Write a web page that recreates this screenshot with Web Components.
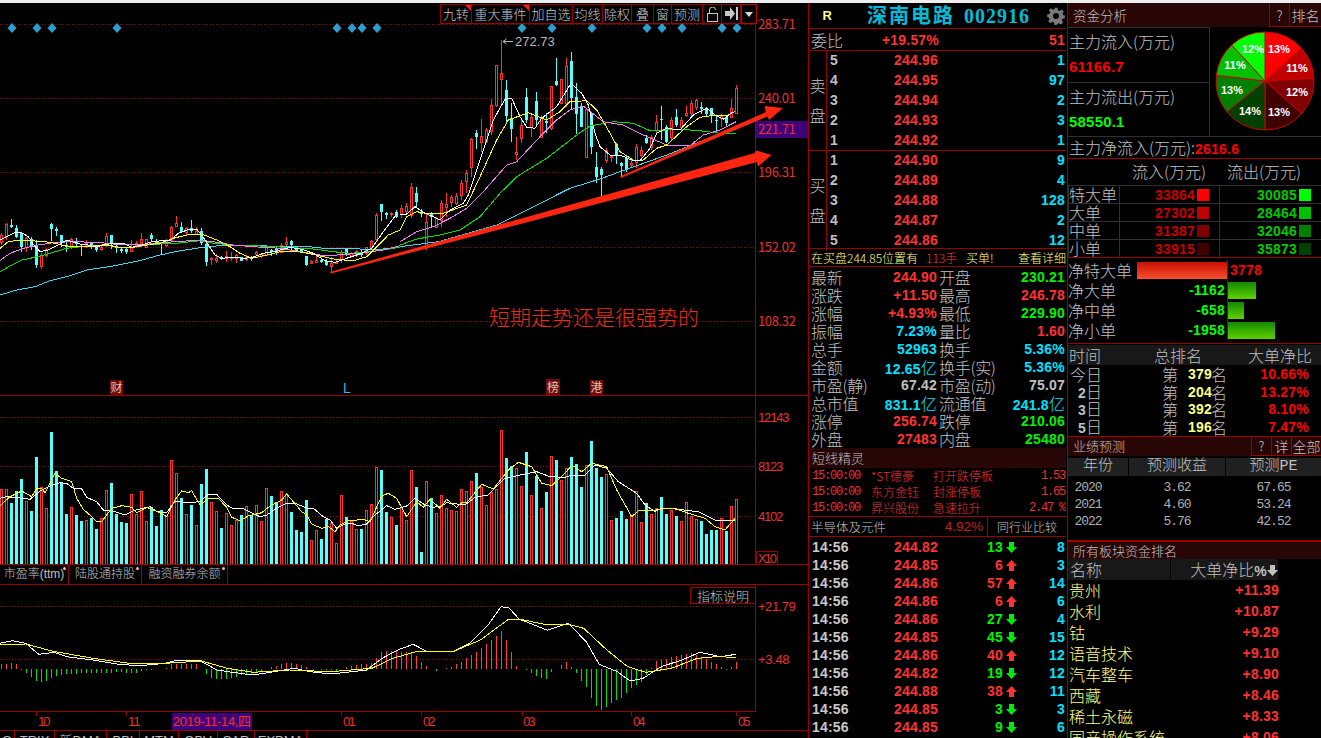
<!DOCTYPE html>
<html lang="zh">
<head>
<meta charset="utf-8">
<title>深南电路 002916</title>
<style>
  html, body { margin: 0; height: 738px; overflow: hidden; background: #000; }
</style>
</head>
<body>
<stock-app>
  <chart-column slot="chart"></chart-column>
  <quote-column slot="quote"></quote-column>
  <fund-column slot="fund"></fund-column>
</stock-app>

<script>
const CJK = '"Noto Sans CJK SC", sans-serif'
const NUM = '"Liberation Sans", "Noto Sans CJK SC", sans-serif'
const LINE = '#990000'
const RED = '#ff3232'
const CYAN = '#54ffff'

// 用量柱顶部 y（放大图坐标），正数红 负数青
const VOL = [
  208,208,-249,-213,-177,243,-273,-111,202,264,
  -36,-153,-186,-282,261,-285,-303,300,-294,-327,
  294,210,-189,-282,-306,-309,222,282,213,303,
  -261,-318,-270,288,120,159,-234,282,-255,315,
  -192,-147,246,273,-324,279,315,300,-285,258,
  -285,255,303,204,-228,-246,213,222,-276,-330,
  -336,-240,360,330,-357,-297,309,369,225,-291,
  303,327,-327,270,252,
  141,-150,-276,291,-315,261,300,150,-201,-396,
  183,-234,279,225,264,270,273,207,213,183,
  -159,201,255,216,207,30,-114,-138,144,198,
  -96,225,-168,264,-216,108,-120,180,144,-111,
  -132,-201,135,-63,-144,-171,162,300,-294,-273,
  -297,285,213,306,-249,282,264,-231,-282,270,
  -288,303,246,288,297,-303,-342,-330,-330,294,
  -333,258,237
]

// [高, 实体上, 实体下, 低]
const CANDLE_A = [
  [130,135,155,165],[100,103,138,150],[87,105,112,115],[105,115,140,145],[125,130,172,185],
  [140,145,172,185],[140,148,172,180],[150,165,225,235],[190,195,228,237],[175,178,195,200],
  [100,102,118,152],[112,118,122,138],[135,135,158,170],[155,165,170,185],[143,146,172,178],
  [145,152,162,170],[165,168,172,198],[150,158,165,175],[155,160,165,177],[168,172,180,185],
  [162,170,176,182],[130,138,160,172],[135,135,160,178],[165,168,175,188],[170,176,182,188],
  [170,178,185,192],[150,170,182,184],[152,158,165,175],[128,148,158,172],[148,148,172,175],
  [128,135,148,155],[148,155,158,165],[155,160,162,192],[148,152,165,170],[108,110,150,155],
  [78,100,108,112],[97,110,125,130],[112,115,125,135],[90,115,122,128],[112,122,132,136],
  [114,122,160,165],[160,162,216,228],[200,203,207,224],[192,205,210,218],[198,202,208,210],
  [182,198,204,215],[185,200,204,212],[192,196,204,218],[202,202,212,213],[195,202,208,213],
  [198,202,208,212],[182,185,193,197],[190,192,197,205],[170,172,194,195],[176,180,186,198],
  [172,178,188,195],[160,165,185,190],[142,155,163,178],[150,152,165,180],[168,170,183,185],
  [175,180,185,190],[198,198,225,228],[210,214,220,222],[195,211,215,220],[205,210,215,218],
  [208,212,226,228],[200,220,228,247],[210,215,218,220],[180,185,208,218],[175,177,195,197],
  [185,190,198,202],[180,183,195,200],[180,187,195,200],[170,172,190,195],[150,153,172,178],
  [70,75,148,155],[42,42,65,92],[65,70,75,88],[65,68,72,80],[60,66,80,85]
]
const CANDLE_B = [
  [495,505,522,535],[490,497,512,525],[430,440,525,535],[440,460,487,500],[508,520,522,530],
  [520,545,620,630],[515,522,530,560],[530,535,560,562],[480,488,540,560],[460,492,500,530],
  [465,472,485,500],[460,468,490,495],[420,430,465,480],[390,398,422,460],[295,298,380,410],
  [270,278,290,328],[238,288,305,335],[265,270,302,310],[178,195,272,285],[75,75,195,200],
  [3,100,118,195],[120,150,228,245],[190,233,268,305],[292,335,343,360],[235,255,295,310],
  [145,172,240,250],[220,232,262,290],[155,183,240,255],[225,235,290,295],[220,243,248,280],
  [138,138,265,270],[55,122,135,138],[118,118,188,190],[55,78,190,200],[35,62,175,210],
  [130,172,222,283],[190,200,260,262],[205,207,350,352],[215,220,322,342],[335,380,410,430],
  [380,388,405,470],[325,330,360,368],[345,348,352,365],[310,312,345,372],[365,370,378,408],
  [345,355,390,395],[360,370,375,385],[312,322,365,385],[318,330,345,350],[285,295,310,312],
  [285,290,320,330],[225,247,270,280],[198,236,241,300],[255,260,305,310],[232,240,290,300],
  [208,230,255,260],[230,240,260,272],[198,220,226,230],[180,190,220,228],[178,180,200,210],
  [185,200,207,222],[200,205,223,232],[203,205,228,250],[225,240,243,272],[222,228,235,262],
  [225,230,250,258],[178,205,232,235],[135,145,218,222]
]
const mapA = ([x, y]) => [x / 3, 190 + y / 3]
const mapB = ([x, y]) => [400 + x / 3, 40 + y / 3]

const MA = [
  { color: '#40d8f0',
    a: [[0,315],[50,300],[105,290],[150,272],[200,260],[260,240],[340,228],[420,212],[480,195],[540,182],[610,172],[680,165],[760,165],[830,170],[910,168],[970,175],[1050,175],[1120,180],[1200,172]],
    b: [[0,620],[115,605],[290,555],[400,500],[510,445],[600,417],[660,395],[800,345],[900,305],[1000,265]] },
  { color: '#00e000',
    a: [[0,245],[35,225],[65,210],[105,202],[150,190],[200,175],[260,168],[340,165],[420,162],[480,162],[530,160],[600,152],[640,160],[700,165],[780,168],[860,172],[940,177],[1000,185],[1050,190],[1110,185],[1160,178],[1200,172]],
    b: [[0,615],[50,597],[120,585],[180,570],[240,530],[300,460],[350,410],[440,355],[530,285],[570,258],[640,245],[700,250],[750,272],[840,268],[900,272],[960,280],[1008,280]] },
  { color: '#f080f0',
    a: [[0,212],[30,190],[70,175],[115,165],[160,158],[210,155],[290,157],[350,163],[420,165],[480,158],[530,155],[600,150],[650,157],[700,165],[760,170],[840,175],[900,185],[960,195],[1010,195],[1080,190],[1150,180],[1200,167]],
    b: [[0,605],[50,575],[100,560],[150,535],[200,505],[250,455],[320,375],[350,365],[420,290],[470,240],[510,210],[550,198],[610,245],[670,255],[730,285],[800,315],[870,317],[910,285],[960,270],[1008,245]] },
  { color: '#ffff00',
    a: [[0,175],[25,155],[60,150],[105,153],[150,157],[200,168],[240,168],[280,168],[320,165],[360,172],[400,172],[440,165],[480,160],[520,145],[560,135],[605,132],[650,150],[690,170],[720,190],[755,205],[800,195],[840,185],[880,183],[925,190],[970,200],[1005,208],[1060,212],[1100,200],[1130,170],[1165,135],[1200,120]],
    b: [[0,570],[20,530],[50,515],[90,522],[130,520],[200,495],[240,410],[290,300],[325,240],[385,218],[440,240],[480,215],[510,185],[560,182],[590,210],[630,280],[660,335],[700,360],[730,360],[770,325],[800,315],[860,260],[900,232],[950,225],[985,225],[1005,215]] },
  { color: '#ffffff',
    a: [[0,150],[20,140],[45,128],[65,128],[85,140],[105,170],[120,185],[145,180],[175,165],[200,150],[240,162],[265,165],[290,172],[305,165],[345,160],[370,160],[395,172],[425,165],[455,155],[485,152],[510,152],[535,130],[570,117],[590,118],[605,135],[625,165],[645,195],[665,205],[695,202],[730,205],[755,203],[790,190],[830,183],[870,172],[905,178],[940,190],[975,212],[1005,217],[1040,205],[1085,190],[1115,175],[1150,125],[1190,72]],
    b: [[0,522],[20,522],[45,500],[75,520],[100,530],[120,540],[150,510],[190,490],[205,465],[240,360],[280,240],[315,178],[335,175],[360,230],[380,262],[405,265],[425,235],[470,200],[513,130],[545,160],[565,195],[585,280],[600,320],[630,345],[660,345],[695,360],[720,362],[750,325],[770,280],[800,265],[840,270],[880,225],[920,205],[945,225],[970,238],[1000,215]] }
]

const VOL_WHITE = [[0,235],[20,230],[70,235],[90,238],[120,213],[150,198],[180,188],[200,190],[220,205],[245,207],[260,232],[290,245],[310,270],[340,273],[375,285],[400,272],[450,260],[470,275],[500,278],[525,243],[560,248],[600,245],[625,223],[650,223],[680,255],[700,266],[730,266],[780,290],[800,285],[830,265],[860,250],[885,250],[920,264],[940,265],[970,290],[990,300],[1010,325],[1035,312],[1055,310],[1075,318],[1100,312],[1125,285],[1160,257],[1185,268],[1220,258],[1245,235],[1275,255],[1300,262],[1325,258],[1340,248],[1395,255],[1425,232],[1465,225],[1515,175],[1575,162],[1610,155],[1650,170],[1695,172],[1715,165],[1755,165],[1785,135],[1820,145],[1855,185],[1910,220],[1935,255],[1965,275],[1985,265],[2025,267],[2095,275],[2145,300],[2205,300]]
const VOL_YELLOW = [[0,257],[30,230],[65,213],[95,230],[110,205],[125,205],[135,218],[165,160],[185,175],[215,185],[230,235],[250,268],[275,290],[290,305],[305,305],[335,265],[365,257],[395,262],[410,278],[440,262],[460,270],[480,278],[500,290],[525,240],[545,213],[565,218],[575,212],[600,255],[625,235],[655,235],[680,262],[695,292],[720,302],[745,288],[785,278],[810,258],[845,240],[860,222],[880,245],[905,275],[920,285],[935,312],[965,325],[985,320],[1005,335],[1020,315],[1045,302],[1060,302],[1085,297],[1110,305],[1125,272],[1145,228],[1165,220],[1190,235],[1220,290],[1250,245],[1270,262],[1290,238],[1320,265],[1340,238],[1370,262],[1385,248],[1400,248],[1445,193],[1480,207],[1525,150],[1555,127],[1595,140],[1625,190],[1655,197],[1695,160],[1715,135],[1745,155],[1775,130],[1820,140],[1850,210],[1895,290],[1915,273],[1955,272],[2005,265],[2030,267],[2065,280],[2115,295],[2145,320],[2175,330],[2205,295]]

const MACD_WHITE = [[0,745],[25,737],[50,745],[75,778],[105,772],[130,785],[180,795],[230,808],[270,812],[320,805],[345,795],[385,795],[420,825],[450,832],[490,840],[530,830],[570,820],[600,830],[640,837],[710,825],[740,790],[770,765],[800,748],[825,768],[880,768],[910,745],[945,690],[970,635],[985,638],[1005,672],[1060,706],[1100,685],[1135,740],[1160,808],[1195,830],[1220,858],[1245,850],[1280,815],[1320,795],[1355,772],[1395,785],[1425,778]]
const MACD_YELLOW = [[0,748],[50,747],[100,768],[180,790],[250,805],[320,805],[390,798],[440,820],[490,832],[560,825],[640,830],[720,820],[760,790],[810,768],[880,768],[930,735],[985,672],[1005,672],[1060,690],[1100,688],[1130,700],[1175,765],[1215,815],[1250,832],[1300,820],[1350,790],[1385,785],[1425,787]]
const MACD_BARS = [[0,15],[30,18],[38,1],[48,-10],[70,-35],[85,-40],[100,-25],[130,-15],[180,-12],[230,-10],[260,-12],[280,-3],[320,0],[330,15],[380,15],[392,-4],[405,-25],[430,-32],[470,-18],[505,-5],[520,3],[555,20],[585,12],[600,0],[650,-5],[665,3],[700,15],[720,18],[740,55],[800,50],[815,20],[830,3],[845,-5],[870,5],[890,20],[905,35],[930,60],[950,85],[970,115],[980,85],[990,50],[1000,5],[1020,-5],[1055,-35],[1065,-10],[1080,3],[1095,22],[1110,0],[1120,-25],[1135,-55],[1150,-105],[1165,-125],[1185,-100],[1205,-85],[1220,-60],[1240,-40],[1255,-10],[1270,25],[1340,48],[1365,30],[1390,12],[1405,-2],[1415,5],[1425,22]]

const poly = (points, color, width = 1) =>
  `<polyline fill="none" shape-rendering="crispEdges" stroke="${color}" stroke-width="${width}" points="${points.map(p => p[0].toFixed(1) + ',' + p[1].toFixed(1)).join(' ')}"/>`
const dash = (y, x2 = 755) => `<line x1="0" x2="${x2}" y1="${y + .5}" y2="${y + .5}" stroke="#a00000" stroke-dasharray="1 2"/>`
const axisText = (x, y, t) => `<text x="${x}" y="${y}" fill="#e83030" font-size="13" textLength="${t.length * 6.3}" font-family='"Liberation Sans", sans-serif'>${t}</text>`
const barX = i => 1 + 5 * i

// ---------- 图表区 ----------
class CandlePane extends HTMLElement {
  constructor() {
    super()
    this.attachShadow({ mode: 'open' })
  }

  connectedCallback() {
    const all = [...CANDLE_A.map(c => c.map(v => 190 + v / 3)), ...CANDLE_B.map(c => c.map(v => 40 + v / 3))]
    const candles = all.map(([hi, top, bot, lo], i) => {
      const c = barX(i), up = VOL[i] > 0, color = up ? RED : CYAN
      const h = Math.max(Math.round(bot) - Math.round(top), 1)
      const t = Math.round(top)
      const wick = `<line x1="${c + .5}" x2="${c + .5}" y1="${Math.round(hi)}" y2="${Math.round(lo)}" stroke="${color}"/>`
      const body = up
        ? `<rect x="${c - .5}" y="${t + .5}" width="2" height="${h}" fill="#000" stroke="${color}"/>`
        : `<rect x="${c - 1}" y="${t}" width="3" height="${h}" fill="${color}"/>`
      return wick + body
    }).join('')
    const lines = MA.map(m => poly(m.a.map(mapA), m.color) + poly(m.b.map(mapB), m.color)).join('')
    const diamonds = [12, 37, 52, 117, 337, 352, 362, 377, 522, 552, 592, 647, 662, 682, 722, 737]
      .map(x => `<polygon points="${x},23 ${x + 4.5},28 ${x},33 ${x - 4.5},28" fill="#2a9fd0"/>`).join('')
    this.shadowRoot.innerHTML = `
    <style>
      :host { display: block; position: relative; height: 393px; box-sizing: border-box; }
      svg { display: block; }
      .red { fill: #ff2510; }
      text { font-family: ${CJK}; }
      tool-bar { position: absolute; top: 1px; left: 440px; }
    </style>
    <svg width="808" height="393" viewBox="0 3 808 393">
      ${[24, 98, 172, 247, 321].map(y => dash(y)).join('')}
      <line x1="755.5" x2="755.5" y1="3" y2="396" stroke="${LINE}"/>
      ${diamonds}
      <g shape-rendering="crispEdges">${candles}</g>
      ${lines}
      <line x1="501.5" x2="501.5" y1="40" y2="60" stroke="${RED}"/>
      <path d="M513 41.5H503M503 41.5l3.5 -2.5M503 41.5l3.5 2.5" stroke="#b8b8b8" fill="none"/>
      <text x="515" y="46" fill="#b8b8b8" font-size="13" style='font-family:"Liberation Sans"'>272.73</text>
      <polygon class="red" points="330,272 755,153 756.5,150.5 771.5,155 758,166.5 757,162 331,273.5"/>
      <polygon class="red" points="620,176.5 766,112 764.5,106 783,108 769,120 767.5,116.5 621,178"/>
      ${axisText(758, 29, '283.71')}
      ${axisText(758, 103, '240.01')}
      <rect x="756" y="121" width="52" height="17" fill="#40007a"/>
      ${axisText(758, 134, '221.71')}
      ${axisText(758, 177, '196.31')}
      ${axisText(758, 252, '152.02')}
      ${axisText(758, 326, '108.32')}
      <text x="489" y="325" fill="#e82c18" font-size="21" font-weight="300">短期走势还是很强势的</text>
      <g font-size="12">
        <rect x="110" y="380" width="13" height="15" fill="#6a0c0c"/>
        <text x="110.5" y="392" fill="#e0c0b0">财</text>
        <text x="343" y="393" fill="#28b8e8" style='font-family:"Liberation Sans"' font-size="14">L</text>
        <rect x="546" y="379" width="14" height="16" fill="#6a0c0c"/>
        <text x="547" y="392" fill="#e0c0b0">榜</text>
        <rect x="590" y="380" width="13" height="15" fill="#6a0c0c"/>
        <text x="590.5" y="392" fill="#e0c0b0">港</text>
      </g>
      <line x1="0" x2="808" y1="395.5" y2="395.5" stroke="${LINE}"/>
    </svg>
    <tool-bar></tool-bar>
    `
  }
}

class ToolBar extends HTMLElement {
  constructor() {
    super()
    this.attachShadow({ mode: 'open' })
  }

  connectedCallback() {
    const items = [['九转', 31, 1], ['重大事件', 58, 1], ['加自选', 43], ['均线', 30], ['除权', 29], ['叠', 22], ['窗', 18], ['预测', 31]]
    this.shadowRoot.innerHTML = `
    <style>
      :host { display: flex; height: 20px; box-sizing: border-box; background: #000; border: 1px solid ${LINE}; font: 300 13px/18px ${CJK}; color: #c8c8c8; }
      div { box-sizing: border-box; border-right: 1px solid ${LINE}; text-align: center; position: relative; white-space: nowrap; }
      .mark::after { content: ''; position: absolute; top: 0; right: 0; border-top: 6px solid #f02020; border-left: 6px solid transparent; }
      svg { display: block; margin: 2px auto; }
      .drop { border: 1px solid #c00000; margin: -1px -1px -1px 0; height: 20px; }
    </style>
    ${items.map(([t, w, m]) => `<div style="width:${w}px" class="${m ? 'mark' : ''}">${t}</div>`).join('')}
    <div style="width:19px"><svg width="11" height="15" viewBox="0 0 11 15" fill="none" stroke="#c8c8c8"><rect x=".5" y="6.5" width="10" height="8"/><path d="M2.5 6V3a3 3 0 0 1 6 0"/></svg></div>
    <div style="width:19px"><svg width="13" height="13" viewBox="0 0 13 13" fill="#c8c8c8"><path d="M0 4h5V0l5 6.5-5 6.5V9H0zM11 0h2v13h-2z"/></svg></div>
    <div class="drop" style="width:16px"><svg width="8" height="14" viewBox="0 0 8 14" fill="#d8d8d8"><path d="M0 5h8l-4 5z"/></svg></div>
    `
  }
}

class VolumePane extends HTMLElement {
  constructor() {
    super()
    this.attachShadow({ mode: 'open' })
  }

  connectedCallback() {
    const bars = VOL.map((v, i) => {
      const c = barX(i), top = Math.round(420 + Math.abs(v) / 3)
      return v > 0
        ? `<rect x="${c - .5}" y="${top + .5}" width="2" height="${565 - top}" fill="#000" stroke="${RED}"/>`
        : `<rect x="${c - 1}" y="${top}" width="3" height="${565 - top}" fill="${CYAN}"/>`
    }).join('')
    const map = ([x, y]) => [x / 3, 420 + y / 3]
    this.shadowRoot.innerHTML = `
    <style>
      :host { display: block; height: 169px; }
      svg { display: block; }
    </style>
    <svg width="808" height="169" viewBox="0 396 808 169">
      ${[417, 466, 516].map(y => dash(y)).join('')}
      <line x1="755.5" x2="755.5" y1="396" y2="565" stroke="${LINE}"/>
      <g shape-rendering="crispEdges">${bars}</g>
      ${poly(VOL_WHITE.map(map), '#fff')}
      ${poly(VOL_YELLOW.map(map), '#ffff00')}
      ${axisText(758, 422, '12143')}
      ${axisText(758, 471, '8123')}
      ${axisText(758, 521, '4102')}
      <rect x="756.5" y="551.5" width="21" height="13" fill="none" stroke="${LINE}"/>
      ${axisText(758, 563, 'X10')}
      <line x1="0" x2="808" y1="564.5" y2="564.5" stroke="${LINE}"/>
    </svg>
    `
  }
}

class TabStrip extends HTMLElement {
  constructor() {
    super()
    this.attachShadow({ mode: 'open' })
  }

  connectedCallback() {
    const items = this.getAttribute('items').split('|').map(s => s.split(':'))
    this.shadowRoot.innerHTML = `
    <style>
      :host { display: flex; box-sizing: border-box; overflow: hidden; height: 20px; border-bottom: 1px solid ${LINE}; font: 300 12px/19px ${NUM}; color: #c0c0c0; }
      :host([flat]) { height: 8px; border-top: 1px solid ${LINE}; border-bottom: 0; line-height: 20px; font-size: 13px; }
      div { box-sizing: border-box; border-right: 1px solid ${LINE}; text-align: center; position: relative; white-space: nowrap; flex: none; }
      :host([flat]) div { text-align: center; height: 30px; overflow: hidden; }
      .dot::after { content: ''; position: absolute; top: 2px; right: 2px; width: 3px; height: 3px; background: #ffb0b0; border-radius: 50%; }
    </style>
    ${items.map(([t, w]) => `<div style="width:${w}px" class="${this.hasAttribute('flat') ? '' : 'dot'}">${t}</div>`).join('')}
    `
  }
}

class MacdPane extends HTMLElement {
  constructor() {
    super()
    this.attachShadow({ mode: 'open' })
  }

  connectedCallback() {
    const map = ([x, y]) => [x / 1.936, 395 + y / 3]
    const valueAt = zx => {
      for (let k = 0; k < MACD_BARS.length - 1; k++) {
        const [x1, v1] = MACD_BARS[k], [x2, v2] = MACD_BARS[k + 1]
        if (zx >= x1 && zx <= x2) return v1 + (v2 - v1) * (zx - x1) / (x2 - x1)
      }
      return 0
    }
    const base = 669
    const bars = VOL.map((_, i) => {
      const c = barX(i), v = valueAt(c * 1.936) / 3
      if (Math.abs(v) < .5) return ''
      return `<line x1="${c + .5}" x2="${c + .5}" y1="${base}" y2="${base - v}" stroke="${v > 0 ? '#ff4040' : '#00e010'}"/>`
    }).join('')
    this.shadowRoot.innerHTML = `
    <style>
      :host { display: block; position: relative; height: 127px; }
      svg { display: block; }
      .help { position: absolute; left: 690px; top: 2px; width: 66px; height: 17px; box-sizing: border-box; border: 1px solid ${LINE}; color: #c0c0c0; font: 300 13px/15px ${CJK}; text-align: center; background: #000; }
    </style>
    <svg width="808" height="127" viewBox="0 585 808 127">
      ${dash(606)}${dash(659)}
      <line x1="755.5" x2="755.5" y1="585" y2="712" stroke="${LINE}"/>
      <g shape-rendering="crispEdges">${bars}</g>
      ${poly(MACD_WHITE.map(map), '#fff')}
      ${poly(MACD_YELLOW.map(map), '#ffff00')}
      ${axisText(758, 611, '+21.79')}
      ${axisText(758, 664, '+3.48')}
      <line x1="0" x2="756" y1="711.5" y2="711.5" stroke="${LINE}"/>
    </svg>
    <div class="help">指标说明</div>
    `
  }
}

class DateAxis extends HTMLElement {
  constructor() {
    super()
    this.attachShadow({ mode: 'open' })
  }

  connectedCallback() {
    const labels = [[38, '10'], [128, '11'], [343, '01'], [423, '02'], [523, '03'], [633, '04'], [738, '05']]
    const ticks = [36, 126, 341, 421, 522, 631, 736]
    this.shadowRoot.innerHTML = `
    <style>
      :host { display: block; height: 18px; }
      svg { display: block; }
    </style>
    <svg width="808" height="18" viewBox="0 712 808 18">
      ${ticks.map(x => `<line x1="${x + .5}" x2="${x + .5}" y1="712" y2="716" stroke="${LINE}"/>`).join('')}
      ${labels.map(([x, t]) => axisText(x, 726, t)).join('')}
      <rect x="172" y="713" width="80" height="17" fill="#40007a"/>
      <text x="173" y="726" fill="#f03030" font-size="13" textLength="78" style='font-family:"Liberation Sans","Noto Sans CJK SC"'>2019-11-14,四</text>
    </svg>
    `
  }
}

class ChartColumn extends HTMLElement {
  constructor() {
    super()
    this.attachShadow({ mode: 'open' })
  }

  connectedCallback() {
    this.shadowRoot.innerHTML = `
    <style>
      :host { display: flex; flex-direction: column; height: 735px; overflow: hidden; }
    </style>
    <candle-pane></candle-pane>
    <volume-pane></volume-pane>
    <tab-strip items="市盈率(ttm):69|陆股通持股:73|融资融券余额:86"></tab-strip>
    <macd-pane></macd-pane>
    <date-axis></date-axis>
    <tab-strip flat items="O:15|TRIX:40|新DMA:52|BBI:33|MTM:39|OBV:39|SAR:37|EXPMA:52"></tab-strip>
    `
  }
}

// ---------- 盘口 ----------
class QuoteColumn extends HTMLElement {
  constructor() {
    super()
    this.attachShadow({ mode: 'open' })
  }

  connectedCallback() {
    const book = (rows) => rows.map(([n, p, v]) => `<b class="n">${n}</b><b class="r p">${p}</b><b class="c v">${v}</b>`).join('')
    const quotes = [
      ['最新', '244.90', 'r', '开盘', '230.21', 'g'], ['涨跌', '+11.50', 'r', '最高', '246.78', 'r'],
      ['涨幅', '+4.93%', 'r', '最低', '229.90', 'g'], ['振幅', '7.23%', 'c', '量比', '1.60', 'r'],
      ['总手', '52963', 'c', '换手', '5.36%', 'c'], ['金额', '12.65亿', 'c', '换手(实)', '5.36%', 'c'],
      ['市盈(静)', '67.42', 'w', '市盈(动)', '75.07', 'w'], ['总市值', '831.1亿', 'c', '流通值', '241.8亿', 'c'],
      ['涨停', '256.74', 'r', '跌停', '210.06', 'g'], ['外盘', '27483', 'r', '内盘', '25480', 'g']
    ]
    const ticks = [
      ['244.82', 13, 0, 8], ['244.85', 6, 1, 3], ['244.86', 57, 1, 14], ['244.86', 6, 1, 6],
      ['244.86', 27, 0, 4], ['244.85', 45, 0, 15], ['244.86', 40, 1, 12], ['244.82', 19, 0, 12],
      ['244.88', 38, 1, 11], ['244.85', 3, 0, 3], ['244.85', 9, 0, 6]
    ]
    const upArrow = '<svg width="11" height="11" viewBox="0 0 11 11"><path fill="#ff3232" d="M5.5 0L11 6H8V11H3V6H0z"/></svg>'
    const downArrow = '<svg width="11" height="11" viewBox="0 0 11 11"><path fill="#00e810" d="M5.5 11L11 5H8V0H3V5H0z"/></svg>'
    this.shadowRoot.innerHTML = `
    <style>
      :host { display: block; box-sizing: border-box; height: 735px; overflow: hidden; border-left: 1px solid ${LINE}; font: 300 16px/18px ${CJK}; color: #c0c0c0; }
      b { font: bold 14px/18px ${NUM}; letter-spacing: .2px; }
      .r { color: ${RED}; } .c { color: #00e0ff; } .g { color: #00f000; } .w { color: #c0c0c0; }
      .title { display: flex; align-items: center; height: 26px; box-sizing: border-box; border-bottom: 1px solid ${LINE}; }
      .title .R { width: 23px; text-align: right; padding-right: 35px; color: #ffff80; font: bold 13px ${NUM}; }
      .title .name { font: bold 20px/24px "Liberation Serif", "Noto Sans CJK SC", serif; color: #00bcd8; letter-spacing: 2px; white-space: nowrap; }
      .title .name span { letter-spacing: 1px; margin-left: 9px; }
      .title svg { margin-left: auto; margin-right: 1px; }
      .wei { display: grid; grid-template-columns: 40px 88px 1fr; align-items: center; height: 22px; box-sizing: border-box; padding: 0 1px 0 2px; border-bottom: 1px solid ${LINE}; }
      .wei b:nth-child(2) { text-align: right; } .wei b:nth-child(3) { text-align: right; }
      .side { display: grid; grid-template-columns: 18px 1fr; height: 100px; box-sizing: border-box; border-bottom: 1px solid ${LINE}; }
      .side.buy { height: 98px; }
      .side .lab { border-right: 1px solid ${LINE}; display: flex; flex-direction: column; justify-content: center; gap: 12px; text-align: center; margin-bottom: 0; padding-bottom: 1px; }
      .rows { display: grid; grid-template-columns: 14px 94px 1fr; grid-auto-rows: 20px; align-items: center; padding: 0 1px 0 3px; margin-top: -1px; }
      .rows .n { color: #c0c0c0; } .rows .p { text-align: right; } .rows .v { text-align: right; }
      .info { display: flex; height: 18px; box-sizing: border-box; border-bottom: 1px solid ${LINE}; align-items: center; padding: 0 0 0 2px; font-size: 12px; line-height: 17px; color: #ffff80; white-space: nowrap; }
      .info .a { width: 115px; } .info .b { width: 40px; color: ${RED}; } .info .d { margin-left: auto; }
      .grid { display: grid; grid-template-columns: 50px 76px 58px 1fr; grid-auto-rows: 18px; padding: 1px 1px 0 2px; align-items: center; white-space: nowrap; }
      .grid b { text-align: right; } .grid span { letter-spacing: -.3px; }
      .grid b small { font: 300 16px ${CJK}; }
      .grid .l2 { padding-left: 2px; }
      .head { height: 20px; background: #280606; font-size: 13px; line-height: 20px; padding-left: 3px; }
      .sprite { height: 48px; display: grid; grid-template-columns: 59px 62px 1fr 40px; grid-auto-rows: 16px; padding: 0 1px 0 3px; color: #ef3030; font-size: 12px; line-height: 16px; white-space: nowrap; }
      .sprite i { font: 12px/16px "Liberation Mono", monospace; letter-spacing: -1.2px; }
      .sprite i:nth-child(4n) { text-align: right; }
      .sector { display: flex; height: 21px; box-sizing: border-box; border-top: 1px solid ${LINE}; border-bottom: 1px solid ${LINE}; font-size: 12.5px; line-height: 19px; padding-left: 2px; }
      .sector .pct { margin-left: auto; padding-right: 4px; color: #c02020; font: 13.5px/19px "Liberation Sans"; }
      .sector .btn { width: 79px; box-sizing: border-box; border-left: 1px solid ${LINE}; text-align: center; font-size: 12px; }
      .ticks { display: grid; grid-template-columns: 66px 60px 65px 14px 1fr; grid-auto-rows: 18px; align-items: center; padding: 1px 1px 0 3px; }
      .ticks b { text-align: right; } .ticks b:first-child, .ticks .t { text-align: left; color: #c8c8c8; }
      .ticks svg { justify-self: end; display: block; }
    </style>
    <div class="title">
      <span class="R">R</span>
      <span class="name">深南电路<span>002916</span></span>
      <svg width="18" height="18" viewBox="0 0 24 24"><path fill="#7a7a7a" fill-rule="evenodd" d="M10 1h4l.6 3.2 2.3 1 2.7-1.9 2.8 2.8-1.8 2.7 1 2.3L23.8 11v4l-3.2.6-1 2.3 1.9 2.7-2.8 2.8-2.7-1.9-2.3 1L13 24h-3l-.6-3.2-2.3-1-2.7 1.9-2.8-2.8 1.9-2.7-1-2.3L.2 13.3V10l3.2-.6 1-2.3-1.9-2.7 2.8-2.8 2.7 1.9 2.3-1zM12 8a4 4 0 1 0 0 8 4 4 0 0 0 0-8z"/></svg>
    </div>
    <div class="wei"><span>委比</span><b class="r">+19.57%</b><b class="r">51</b></div>
    <div class="side"><div class="lab"><span>卖</span><span>盘</span></div><div class="rows">
      ${book([[5, '244.96', 1], [4, '244.95', 97], [3, '244.94', 2], [2, '244.93', 3], [1, '244.92', 1]])}
    </div></div>
    <div class="side buy"><div class="lab"><span>买</span><span>盘</span></div><div class="rows">
      ${book([[1, '244.90', 9], [2, '244.89', 4], [3, '244.88', 128], [4, '244.87', 2], [5, '244.86', 12]])}
    </div></div>
    <div class="info"><span class="a">在买盘244.85位置有</span><span class="b">113手</span><span>买单!</span><span class="d">查看详细</span></div>
    <div class="grid">
      ${quotes.map(([a, b, c, d, e, f]) => `<span>${a}</span><b class="${c}">${b.replace('亿', '<small>亿</small>')}</b><span class="l2">${d}</span><b class="${f}">${e.replace('亿', '<small>亿</small>')}</b>`).join('')}
    </div>
    <div class="head">短线精灵</div>
    <div class="sprite">
      <i>15:00:00</i><span>*ST德豪</span><span>打开跌停板</span><i>1.53</i>
      <i>15:00:00</i><span>东方金钰</span><span>封涨停板</span><i>1.65</i>
      <i>15:00:00</i><span>昇兴股份</span><span>急速拉升</span><i>2.47 %</i>
    </div>
    <div class="sector"><span>半导体及元件</span><span class="pct">4.92%</span><span class="btn">同行业比较</span></div>
    <div class="ticks">
      ${ticks.map(([p, q, up, n]) => `<b class="t">14:56</b><b class="r">${p}</b><b class="${up ? 'r' : 'g'}">${q}</b>${up ? upArrow : downArrow}<b class="c">${n}</b>`).join('')}
    </div>
    `
  }
}

// ---------- 资金 ----------
class PanelHead extends HTMLElement {
  constructor() {
    super()
    this.attachShadow({ mode: 'open' })
  }

  connectedCallback() {
    const buttons = (this.getAttribute('buttons') || '').split('|').filter(Boolean).map(s => s.split(':'))
    this.shadowRoot.innerHTML = `
    <style>
      :host { display: flex; box-sizing: border-box; background: #280606; color: #c0c0c0; font: 300 13px/18px ${CJK}; padding-left: 5px; height: 18px; align-items: stretch; }
      span { flex: 1; }
      div { border-left: 1px solid ${LINE}; border-bottom: 1px solid ${LINE}; text-align: center; box-sizing: border-box; }
      .big { font-size: 14px; }
    </style>
    <span><slot></slot></span>
    ${buttons.map(([t, w]) => `<div style="width:${w}px" class="${t.length > 0 && t !== '?' ? 'big' : ''}">${t}</div>`).join('')}
    `
  }
}

class FundPie extends HTMLElement {
  constructor() {
    super()
    this.attachShadow({ mode: 'open' })
  }

  connectedCallback() {
    const values = [33864, 27302, 31387, 33915, 35873, 32046, 28464, 30085]
    const colors = ['#ff0000', '#c00000', '#800000', '#400000', '#004000', '#008000', '#00c000', '#00ff00']
    const labels = [[14, -32, 13], [32, -13, 11], [32, 11, 12], [14, 31, 13], [-15, 30, 14], [-33, 9, 13], [-30, -16, 11], [-12, -32, 12]]
    const total = values.reduce((a, b) => a + b, 0)
    let angle = 0
    const R = 49
    const paths = values.map((v, i) => {
      const a1 = angle, a2 = angle + v / total * Math.PI * 2
      angle = a2
      const p = a => `${(R * Math.sin(a)).toFixed(2)} ${(-R * Math.cos(a)).toFixed(2)}`
      return `<path d="M0 0L${p(a1)}A${R} ${R} 0 0 1 ${p(a2)}Z" fill="${colors[i]}" stroke="#d00000" stroke-width="1"/>`
    }).join('')
    this.shadowRoot.innerHTML = `
    <style>
      :host { display: block; }
      svg { display: block; }
      text { font: bold 11px "Liberation Sans", sans-serif; fill: #fff; text-anchor: middle; }
    </style>
    <svg width="110" height="110" viewBox="-55 -54 110 110">
      ${paths}
      ${labels.map(([x, y, t]) => `<text x="${x}" y="${y + 4}">${t}%</text>`).join('')}
    </svg>
    `
  }
}

class FundColumn extends HTMLElement {
  constructor() {
    super()
    this.attachShadow({ mode: 'open' })
  }

  connectedCallback() {
    const orders = [
      ['特大单', '33864', '#ff0000', '30085', '#00ff00'], ['大单', '27302', '#c00000', '28464', '#00c000'],
      ['中单', '31387', '#800000', '32046', '#008000'], ['小单', '33915', '#400000', '35873', '#004000']
    ]
    const net = [['净大单', '-1162', 28], ['净中单', '-658', 16], ['净小单', '-1958', 47]]
    const rank = [['今日', '379', '10.66%'], ['2日', '204', '13.27%'], ['3日', '392', '8.10%'], ['5日', '196', '7.47%']]
    const fc = [['2020', '3.62', '67.65'], ['2021', '4.60', '53.24'], ['2022', '5.76', '42.52']]
    const sectors = [['贵州', '+11.39'], ['水利', '+10.87'], ['钴', '+9.29'], ['语音技术', '+9.10'], ['汽车整车', '+8.90'], ['西藏', '+8.46'], ['稀土永磁', '+8.33'], ['国产操作系统', '+8.06']]
    this.shadowRoot.innerHTML = `
    <style>
      :host { display: block; box-sizing: border-box; height: 735px; overflow: hidden; border-left: 1px solid ${LINE}; margin-left: 1px; font: 300 16px/18px ${CJK}; color: #c0c0c0; }
      b { font: bold 14px/18px ${NUM}; letter-spacing: .2px; }
      .r { color: #ff0000; } .g { color: #00ff00; } .y { color: #ffff80; }
      .head { height: 24px; line-height: 24px; background: #280606; display: flex; font-size: 13.5px; padding-left: 5px; box-sizing: border-box; }
      .head span:first-child { flex: 1; }
      .head span + span { border-left: 1px solid ${LINE}; border-bottom: 1px solid ${LINE}; text-align: center; box-sizing: border-box; }
      .sum { display: grid; grid-template-columns: 142px 1fr; height: 110px; border-bottom: 1px solid #303030; box-sizing: border-box; }
      .sum .left { border-right: 1px solid #303030; display: grid; grid-template-rows: 55px 55px; }
      .sum .cell { padding: 4px 0 0 1px; display: flex; flex-direction: column; gap: 8px; box-sizing: border-box; border-top: 1px solid #303030; white-space: nowrap; }
      .flow { height: 22px; box-sizing: border-box; border-bottom: 1px solid ${LINE}; line-height: 20px; white-space: nowrap; padding-left: 1px; }
      .th { display: grid; grid-template-columns: 51px 100px 1fr; height: 26px; align-items: center; white-space: nowrap; margin-bottom: 0; padding-bottom: 2px; box-sizing: border-box; }
      .th span { text-align: center; }
      .orders { display: grid; grid-template-columns: 51px 100px 1fr; grid-auto-rows: 18px; height: 73px; box-sizing: border-box; border-bottom: 1px solid ${LINE}; }
      .orders > * { border-top: 1px solid #303030; border-left: 1px solid #303030; box-sizing: border-box; display: flex; align-items: center; justify-content: flex-end; white-space: nowrap; }
      .orders > span { justify-content: flex-start; line-height: 15px; }
      .orders i { display: block; width: 12px; height: 12px; margin: 0 10px 0 2px; }
      .orders b.in { color: #c80000; } .orders b.out { color: #00c800; }
      .net { display: grid; grid-template-columns: 159px 1fr; grid-auto-rows: 20px; height: 86px; padding-top: 2px; box-sizing: border-box; border-bottom: 1px solid ${LINE}; align-items: center; white-space: nowrap; }
      .net > div { display: flex; justify-content: space-between; align-items: center; height: 20px; }
      .net .v { height: 20px; display: flex; align-items: center; border-left: 1px solid #303030; }
      .net .bar { height: 17px; background: linear-gradient(#138a00, #5ed000); }
      .net .redbar { width: 90px; height: 17px; background: linear-gradient(#c81000, #f85030); }
      .net b { padding-right: 2px; }
      .rank-h { display: grid; grid-template-columns: 85px 84px 1fr; height: 20px; align-items: center; background: #181818; white-space: nowrap; padding-left: 1px; box-sizing: border-box; margin-top: 1px; }
      .rank-h span:nth-child(3) { padding-left: 10px; }
      .rank { display: grid; grid-template-columns: 33px 86px 23px 14px 1fr; grid-auto-rows: 17.7px; height: 72px; box-sizing: border-box; border-bottom: 1px solid ${LINE}; align-items: center; padding-left: 1px; }
      .rank .day { text-align: right; white-space: nowrap; }
      .rank .di { text-align: right; padding-right: 10px; }
      .rank b.pct { text-align: right; padding-right: 12px; color: #ff0000; }
      .rank .day b { color: #c0c0c0; }
      .fh { display: grid; grid-template-columns: 60px 96px 1fr; gap: 1px; margin-top: 2px; height: 18px; font: 300 15px/18px "Liberation Mono", ${CJK}; }
      .fh span { background: #202020; text-align: center; }
      .fr { display: grid; grid-template-columns: 60px 96px 1fr; gap: 0 1px; grid-auto-rows: 17px; height: 64px; padding-top: 2.5px; box-sizing: border-box; font: 13px/17px "Liberation Mono", monospace; letter-spacing: -1px; color: #b0b0b0; }
      .fr span { text-align: center; }
      .fr span:nth-child(3n+1) { padding-right: 20px; }
      .thick { height: 2px; background: ${LINE}; }
      .sector-h { height: 17px; background: #280606; font-size: 13px; line-height: 17px; padding-left: 5px; }
      .st { display: grid; grid-template-columns: 102px 107px; gap: 1px; height: 20px; }
      .st span { background: #181818; line-height: 20px; white-space: nowrap; padding-left: 2px; }
      .st span:last-child { text-align: right; padding: 0; }
      .st b { color: #c0c0c0; }
      .sec { display: grid; grid-template-columns: 130px 80px; grid-auto-rows: 21px; align-items: center; white-space: nowrap; padding-left: 1px; color: #ffff80; }
      .sec b { text-align: right; color: ${RED}; }
    </style>
    <div class="head"><span>资金分析</span><span style="width:20px">?</span><span style="width:32px;font-size:14px">排名</span></div>
    <div class="sum">
      <div class="left">
        <div class="cell"><span>主力流入(万元)</span><b class="r" style="font-size:15px">61166.7</b></div>
        <div class="cell"><span>主力流出(万元)</span><b class="g" style="font-size:15px">58550.1</b></div>
      </div>
      <fund-pie></fund-pie>
    </div>
    <div class="flow">主力净流入(万元):<b class="r" style="font-size:14px">2616.6</b></div>
    <div class="th"><i></i><span>流入(万元)</span><span style="padding-right:12px">流出(万元)</span></div>
    <div class="orders">
      ${orders.map(([n, a, c1, d, c2]) => `<span>${n}</span><div><b class="in">${a}</b><i style="background:${c1}"></i></div><div><b class="out">${d}</b><i style="background:${c2}"></i></div>`).join('')}
    </div>
    <div class="net">
      <div><span>净特大单</span><i class="redbar"></i></div><div class="v"><b class="r" style="padding-left:2px">3778</b></div>
      ${net.map(([n, v, w]) => `<div><span>${n}</span><b class="g">${v}</b></div><div class="v"><i class="bar" style="width:${w}px"></i></div>`).join('')}
    </div>
    <div class="rank-h"><span>时间</span><span>总排名</span><span>大单净比</span></div>
    <div class="rank">
      ${rank.map(([d, n, p]) => `<span class="day">${d.replace(/(\d)/, '<b>$1</b>')}</span><span class="di">第</span><b class="y">${n}</b><span>名</span><b class="pct">${p}</b>`).join('')}
    </div>
    <panel-head buttons="?:20|详:20|全部:30" style="height:19px">业绩预测</panel-head>
    <div class="fh"><span>年份</span><span>预测收益</span><span>预测PE</span></div>
    <div class="fr">
      ${fc.map(r => r.map(c => `<span>${c}</span>`).join('')).join('')}
    </div>
    <div class="thick"></div>
    <div class="sector-h">所有板块资金排名</div>
    <div class="st"><span>名称</span><span>大单净比<b>%</b><svg width="11" height="11" viewBox="0 0 11 11"><path fill="#c0c0c0" d="M5.5 11L11 5H8V0H3V5H0z"/></svg></span></div>
    <div class="sec">
      ${sectors.map(([n, v]) => `<span>${n}</span><b>${v}</b>`).join('')}
    </div>
    `
  }
}

class StockApp extends HTMLElement {
  constructor() {
    super()
    this.attachShadow({ mode: 'open' })
  }

  connectedCallback() {
    this.shadowRoot.innerHTML = `
    <style>
      :host { display: block; width: 1321px; height: 738px; overflow: hidden; background: #000; border-top: 3px solid #eeeeee; box-sizing: border-box; }
      .cols { display: grid; grid-template-columns: 808px 258px 255px; height: 735px; }
    </style>
    <div class="cols">
      <slot name="chart"></slot>
      <slot name="quote"></slot>
      <slot name="fund"></slot>
    </div>
    `
  }
}

customElements.define('candle-pane', CandlePane)
customElements.define('tool-bar', ToolBar)
customElements.define('volume-pane', VolumePane)
customElements.define('tab-strip', TabStrip)
customElements.define('macd-pane', MacdPane)
customElements.define('date-axis', DateAxis)
customElements.define('chart-column', ChartColumn)
customElements.define('quote-column', QuoteColumn)
customElements.define('panel-head', PanelHead)
customElements.define('fund-pie', FundPie)
customElements.define('fund-column', FundColumn)
customElements.define('stock-app', StockApp)
</script>
</body>
</html>
